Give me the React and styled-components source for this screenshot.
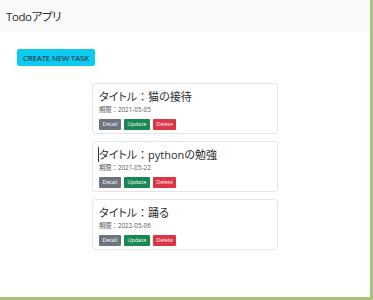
import styled, { createGlobalStyle } from 'styled-components'

const GlobalStyle = createGlobalStyle`
      html, body {
            margin: 0;
            padding: 0;
            background: #adc17e;
      }
      body {
            font-family: "Open Sans", "Noto Sans CJK JP", sans-serif;
            font-feature-settings: "palt";
            color: #212529;
      }
`

const tasks = [
      { id: 1, title: '猫の接待', deadline: '2021-05-05' },
      { id: 2, title: 'pythonの勉強', deadline: '2021-05-22', caret: true },
      { id: 3, title: '踊る', deadline: '2022-05-06' },
]

const App = () => {
      return (
            <>
                  <GlobalStyle />
                  <Window>
                        <Navbar>
                              <Brand>Todoアプリ</Brand>
                        </Navbar>
                        <Main>
                              <CreateButton>CREATE NEW TASK</CreateButton>
                              <CardList>
                                    {tasks.map(task => (
                                          <Card key={task.id}>
                                                <Title caret={task.caret ? 1 : 0}>タイトル<Sep>：</Sep>{task.title}</Title>
                                                <Deadline>期限<Sep>：</Sep>{task.deadline}</Deadline>
                                                <BtnRow>
                                                      <SmallBtn variant="detail">Detail</SmallBtn>
                                                      <SmallBtn variant="update">Update</SmallBtn>
                                                      <SmallBtn variant="delete">Delete</SmallBtn>
                                                </BtnRow>
                                          </Card>
                                    ))}
                              </CardList>
                        </Main>
                  </Window>
            </>
      )
}; export default App

const Window = styled.div`
      width: 370px;
      height: 297px;
      background: #fff;
      overflow: hidden;
`

const Navbar = styled.nav`
      height: 32px;
      background: #f8f9fa;
      display: flex;
      align-items: center;
      padding-left: 6px;
`

const Brand = styled.span`
      font-size: 11.5px;
      color: #2b2b2b;
      letter-spacing: -0.4px;
`

const Main = styled.div`
      padding: 17px 0 0 0;
`

const CreateButton = styled.button`
      display: block;
      margin-left: 17px;
      width: 78px;
      height: 17px;
      padding: 0;
      border: none;
      border-radius: 2px;
      background: #0dcaf0;
      color: #1a1a1a;
      font-family: "Open Sans", sans-serif;
      font-size: 7.9px;
      letter-spacing: -0.15px;
`

const CardList = styled.div`
      display: flex;
      flex-direction: column;
      align-items: center;
      gap: 7px;
      margin-top: 17px;
`

const Card = styled.div`
      box-sizing: border-box;
      width: 186px;
      height: 51px;
      border: 1px solid #e3e5e8;
      border-radius: 3px;
      padding: 5px 0 0 6px;
`

const Sep = styled.span`
      font-feature-settings: normal;
`

const Title = styled.div`
      font-size: 11px;
      line-height: 15px;
      color: #2d2d2d;
      ${({caret}) => caret ? `border-left: 1px solid #333; margin-left: -1px;` : ''}
`

const Deadline = styled.div`
      margin-top: 2px;
      font-size: 6.3px;
      line-height: 8px;
      color: #555;
`

const colors = {
      detail: '#6c757d',
      update: '#198754',
      delete: '#dc3545',
}

const BtnRow = styled.div`
      display: flex;
      gap: 3px;
      margin-top: 5px;
`

const SmallBtn = styled.button`
      height: 11px;
      padding: 0 3.5px;
      border: none;
      border-radius: 1px;
      background: ${({variant}) => colors[variant]};
      color: #fff;
      font-family: "Open Sans", sans-serif;
      font-size: 5.5px;
      line-height: 11px;
`
